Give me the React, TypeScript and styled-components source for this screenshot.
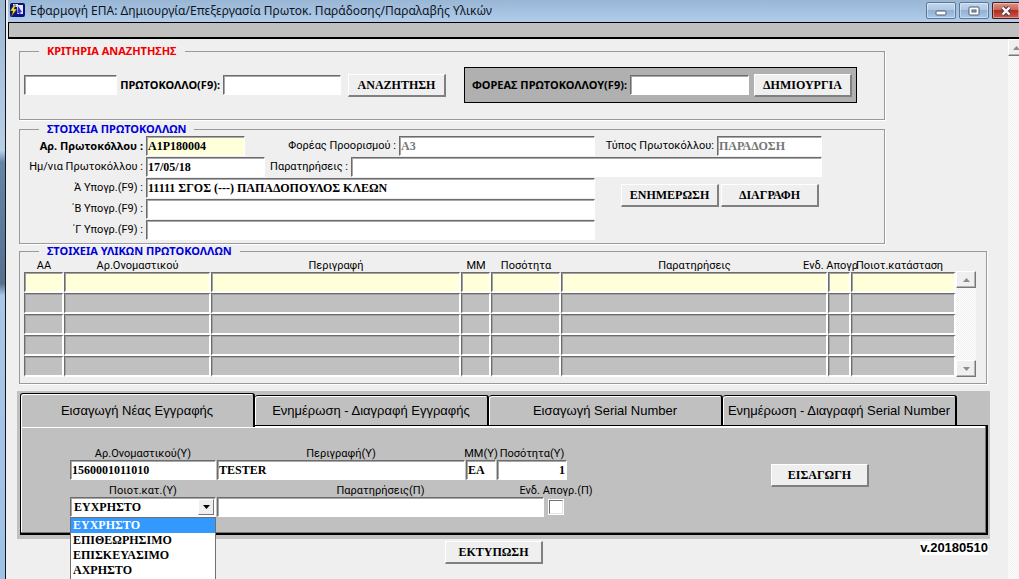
import React, { useState } from "react";
import styled, { createGlobalStyle, css } from "styled-components";

const ui = `"Noto Sans", "Open Sans", sans-serif`;
const labelFace = `Roboto, "Noto Sans", sans-serif`;
const serif = `"Liberation Serif", "Times New Roman", serif`;

const GlobalStyle = createGlobalStyle`
  *, *::before, *::after { box-sizing: border-box; }
  body {
    margin: 0;
    background: #efefef;
    font: 11px/12px ${labelFace};
    color: #000;
  }
`;

const sunken = css`
  border: 1px solid;
  border-color: #6c6c6c #fff #fff #6c6c6c;
  box-shadow: inset 1px 1px 0 #a8a8a8;
`;

const Window = styled.div`
  display: flex;
  height: 100vh;
  overflow: hidden;
`;

const Edge = styled.div`
  flex: none;
  width: 8px;
  border-right: 2px solid #efefef;
  background: linear-gradient(#9db7d3, #b9cfe8 26%, #6585a7 28%, #56718e 49%, #a9c7e8 51%, #9fc1e6);
  box-shadow: inset -1px 0 0 #101820;
`;

const Column = styled.div`
  flex: 1;
  min-width: 0;
  display: flex;
  flex-direction: column;
`;

const TitleBar = styled.header`
  display: flex;
  align-items: flex-start;
  height: 22px;
  flex: none;
  background: linear-gradient(#9ab6d5, #a5c3e3 60%, #b4cde8);
`;

const TitleIcon = styled.svg`
  flex: none;
  margin: 2px 4px 0 1px;
`;

const Title = styled.h1`
  margin: 0;
  flex: 1;
  min-width: 0;
  overflow: hidden;
  white-space: nowrap;
  font: 12px/22px ${ui};
  color: #101418;
`;

const WindowControls = styled.div`
  display: flex;
  gap: 3px;
  padding-top: 2px;
`;

const ControlButton = styled.button<{ $close?: boolean }>`
  display: flex;
  align-items: center;
  justify-content: center;
  width: ${(p) => (p.$close ? 27 : 30)}px;
  height: 17px;
  padding: 0;
  border: 1px solid ${(p) => (p.$close ? "#4c1a18" : "#5c7896")};
  border-right-width: ${(p) => (p.$close ? 0 : 1)}px;
  border-radius: ${(p) => (p.$close ? "2px 0 0 2px" : "2px")};
  box-shadow: inset 0 0 0 1px rgba(255, 255, 255, 0.4);
  background: ${(p) =>
    p.$close
      ? "linear-gradient(#dc9486, #c9655a 45%, #b02c20 50%, #cc5a48)"
      : "linear-gradient(#c3d7ee, #b0c8e4 45%, #93b1d3 50%, #a9c6e6)"};
`;

const MenuStrip = styled.div`
  flex: none;
  height: 17px;
  border: solid #000;
  border-width: 1px 0 2px 1px;
  background: #c0c0c0;
`;

const Body = styled.div`
  flex: 1;
  min-height: 0;
  display: flex;
`;

const Main = styled.main`
  flex: 1;
  min-width: 0;
  display: flex;
  flex-direction: column;
  padding: 6px 18px 0 9px;
`;

const dither = css`
  background: repeating-conic-gradient(#efefef 0 25%, #fff 0 50%) 0 0 / 2px 2px;
`;

const PageScroll = styled.div`
  flex: none;
  width: 11px;
  overflow: hidden;
  ${dither}
`;

const ArrowButton = styled.button<{ $w: number }>`
  display: flex;
  align-items: center;
  justify-content: center;
  flex: none;
  width: ${(p) => p.$w}px;
  height: 17px;
  padding: 0;
  border: 1px solid;
  border-color: #fff #777 #777 #fff;
  box-shadow: inset -1px -1px 0 #b4b4b4;
  background: #efefef;
`;

const Group = styled.fieldset<{ $wide?: boolean }>`
  min-width: 0;
  margin: 0 ${(p) => (p.$wide ? 3 : 105)}px 0 2px;
  padding: 0 4px;
  border: 1px solid #9a9a9a;
  box-shadow: 1px 1px 0 #fff;
`;

const Legend = styled.legend<{ $color: string }>`
  height: 12px;
  margin-left: 15px;
  padding: 0 8px;
  font-family: ${ui};
  font-weight: bold;
  color: ${(p) => p.$color};
  white-space: nowrap;
`;

const SearchRow = styled.div`
  display: flex;
  align-items: center;
  padding: 10px 23px 16px 0;
`;

const FieldLabel = styled.label<{ $w: number; $bold?: boolean }>`
  flex: none;
  width: ${(p) => p.$w}px;
  padding-right: 3px;
  text-align: right;
  white-space: nowrap;
  font-family: ${(p) => (p.$bold ? ui : labelFace)};
  font-weight: ${(p) => (p.$bold ? "bold" : "normal")};
`;

const Field = styled.input<{ $w?: number; $tone?: string }>`
  ${sunken}
  flex: ${(p) => (p.$w ? "none" : "1 1 0")};
  width: ${(p) => (p.$w ? `${p.$w}px` : "100%")};
  min-width: 0;
  height: 20px;
  padding: 0 1px;
  border-radius: 0;
  outline: none;
  background: ${(p) => p.$tone ?? "#fff"};
  font: bold 12px/16px ${serif};
  color: #000;

  &:disabled {
    color: #777;
    -webkit-text-fill-color: #777;
  }
`;

const PushButton = styled.button`
  flex: none;
  width: 98px;
  height: 23px;
  padding: 0;
  border: solid;
  border-width: 1px 2px 2px 1px;
  border-color: #fff #808080 #808080 #fff;
  background: #efefef;
  font: bold 12px/18px ${serif};
  color: #000;
`;

const SearchButton = styled(PushButton)`
  margin-left: 7px;
`;

const CreatePanel = styled.div`
  flex: 1;
  display: flex;
  align-items: center;
  gap: 5px;
  height: 36px;
  margin-left: 18px;
  padding: 0 4px 0 3px;
  border: 1px solid #000;
  background: #b0b0b0;

  label { margin-right: -5px; }
`;

const Details = styled.div`
  display: flex;
  flex-direction: column;
  gap: 1px;
  padding: 1px 58px 3px 0;
`;

const Line = styled.div`
  display: flex;
  align-items: center;
`;

const SignatureBlock = styled.div`
  display: flex;
  align-items: flex-start;
`;

const Signatures = styled.div`
  flex: 1;
  min-width: 0;
  display: flex;
  flex-direction: column;
  gap: 1px;
`;

const Actions = styled.div`
  display: flex;
  gap: 2px;
  padding: 6px 3px 0 26px;
`;

const GridArea = styled.div`
  display: flex;
  align-items: flex-end;
  padding: 3px 6px 6px 0;
`;

const Grid = styled.table`
  flex: 1;
  width: 100%;
  table-layout: fixed;
  border-collapse: separate;
  border-spacing: 0;
`;

const HeadCell = styled.th<{ $shift?: number }>`
  height: 12px;
  padding: 0;
  font-weight: normal;
  white-space: nowrap;

  div { display: flex; justify-content: center; }
  span { padding-right: ${(p) => p.$shift ?? 0}px; }
`;

const Cell = styled.td<{ $current: boolean }>`
  height: 21px;
  padding: 0;
  border: solid;
  border-width: 1px 2px 2px 1px;
  border-color: #6c6c6c #fff #fff #6c6c6c;
  box-shadow: inset 1px 1px 0 #a0a0a0;
  background: ${(p) => (p.$current ? "#ffffd9" : "#c0c0c0")};
`;

const GridScroll = styled.div`
  display: flex;
  flex-direction: column;
  justify-content: space-between;
  width: 20px;
  height: 106px;
  ${dither}
`;

const TabArea = styled.section`
  margin-top: 7px;
  padding: 2px 2px 4px 3px;
  background: #c0c0c0;
`;

const TabBar = styled.div`
  display: flex;
  align-items: flex-end;
  padding-right: 31px;
`;

const Tab = styled.button<{ $active: boolean }>`
  position: relative;
  z-index: ${(p) => (p.$active ? 1 : 0)};
  flex: 1 1 0;
  min-width: 0;
  height: ${(p) => (p.$active ? 34 : 30)}px;
  margin-bottom: ${(p) => (p.$active ? -2 : 0)}px;
  padding: 0;
  border: solid #000;
  border-width: ${(p) => (p.$active ? "1px 2px 0 1px" : "1px 2px 0 0")};
  border-radius: 3px 3px 0 0;
  box-shadow: inset 1px 1px 0 #fff;
  background: #c0c0c0;
  font: 13px/16px "Liberation Sans", Arial, sans-serif;
  color: #000;
  white-space: nowrap;
`;

const TabPanel = styled.div`
  position: relative;
  display: flex;
  align-items: flex-start;
  padding: 21px 117px 16px 49px;
  border: solid #000;
  border-width: 1px 2px 2px 1px;
  box-shadow: inset -1px -1px 0 #777, inset 1px 2px 0 #fff;

  button { margin-top: 17px; }
`;

const Form = styled.div`
  flex: 1;
  min-width: 0;
  display: flex;
  flex-direction: column;
  gap: 4px;
  margin-right: 204px;
`;

const FormRow = styled.div`
  display: flex;
  gap: 1px;
`;

const Stack = styled.div<{ $w?: number }>`
  flex: ${(p) => (p.$w ? "none" : "1 1 0")};
  width: ${(p) => (p.$w ? `${p.$w}px` : "auto")};
  min-width: 0;
  display: flex;
  flex-direction: column;
  align-items: center;
  position: relative;

  label { white-space: nowrap; line-height: 13px; }
  input:not([type="checkbox"]) { flex: none; width: 100%; }
`;

const Amount = styled(Field)`
  text-align: right;
`;

const SelectBox = styled.div`
  ${sunken}
  display: flex;
  align-items: center;
  width: 100%;
  height: 20px;
  padding: 1px;
  background: #fff;
`;

const Select = styled.select`
  appearance: none;
  flex: 1;
  min-width: 0;
  height: 16px;
  padding: 0 2px;
  border: 0;
  outline: none;
  background: transparent;
  font: bold 12px/16px ${serif};
  color: #000;
`;

const DropArrow = styled.span`
  display: flex;
  align-items: center;
  justify-content: center;
  width: 16px;
  height: 16px;
  border: 1px solid;
  border-color: #fff #777 #777 #fff;
  background: #efefef;
`;

const OptionList = styled.ul`
  position: absolute;
  z-index: 2;
  top: 100%;
  left: 0;
  right: 0;
  margin: 0;
  padding: 0 0 3px;
  border: 1px solid #707070;
  background: #fff;
  list-style: none;
`;

const Option = styled.li<{ $selected: boolean }>`
  padding: 0 2px;
  font: bold 12px/15px ${serif};
  color: ${(p) => (p.$selected ? "#fff" : "#000")};
  background: ${(p) => (p.$selected ? "#3399ff" : "#fff")};
`;

const Check = styled.input`
  appearance: none;
  width: 14px;
  height: 14px;
  margin: 3px 0 0;
  border: 1px solid;
  border-color: #707070 #e4e4e4 #e4e4e4 #707070;
  background: #fff;
  box-shadow: 0 0 0 1px #fff;
`;

const Footer = styled.footer`
  display: grid;
  grid-template-columns: 426px auto 1fr;
  align-items: start;
  padding: 2px 2px 0 2px;

  button { grid-column: 2; }
`;

const Version = styled.span`
  justify-self: end;
  background: #fff;
  font: bold 13px/14px "Liberation Sans", Arial, sans-serif;
`;

const Triangle = ({ down = false, color = "#8c8c8c" }: { down?: boolean; color?: string }) => (
  <svg width="7" height="4" viewBox="0 0 7 4" aria-hidden="true">
    <path d={down ? "M0 0h7L3.5 4z" : "M0 4h7L3.5 0z"} fill={color} />
  </svg>
);

const GroupStack = styled.div`
  display: flex;
  flex-direction: column;
  gap: 3px;
`;

const DetailGroups = styled.div`
  display: flex;
  flex-direction: column;
  gap: 1px;
`;

const columns: { title: string; width?: string; shift?: number }[] = [
  { title: "ΑΑ", width: "40px" },
  { title: "Αρ.Ονομαστικού", width: "147px" },
  { title: "Περιγραφή", width: "250px" },
  { title: "ΜΜ", width: "30px" },
  { title: "Ποσότητα", width: "70px" },
  { title: "Παρατηρήσεις" },
  { title: "Ενδ. Απογρ", width: "23px", shift: 18 },
  { title: "Ποιοτ.κατάσταση", width: "105px", shift: 8 },
];

const tabs = [
  "Εισαγωγή Νέας Εγγραφής",
  "Ενημέρωση - Διαγραφή Εγγραφής",
  "Εισαγωγή Serial Number",
  "Ενημέρωση - Διαγραφή Serial Number",
];

const conditions = ["ΕΥΧΡΗΣΤΟ", "ΕΠΙΘΕΩΡΗΣΙΜΟ", "ΕΠΙΣΚΕΥΑΣΙΜΟ", "ΑΧΡΗΣΤΟ"];

export default function App() {
  const [tab, setTab] = useState(0);
  const [condition, setCondition] = useState(conditions[0]);

  return (
    <Window>
      <GlobalStyle />
      <Edge />
      <Column>
        <TitleBar>
          <TitleIcon width="17" height="16" viewBox="0 0 17 16" aria-hidden="true">
            <rect x="1" y="1" width="15" height="14" rx="2" fill="#10107c" />
            <path d="M4 2h5v3H4zM8 3h6v9H8z" fill="#e4e4fa" />
            <path d="M9 4l4 6-2 .4 1 2-1.4.4-.8-2-1.6 1z" fill="#2c35d8" />
            <path d="M5 3L1 9h3l-2 6 6-8H5l2-4z" fill="#f6ec28" stroke="#2a2a20" strokeWidth=".5" />
          </TitleIcon>
          <Title>Εφαρμογή ΕΠΑ: Δημιουργία/Επεξεργασία Πρωτοκ. Παράδοσης/Παραλαβής Υλικών</Title>
          <WindowControls>
            <ControlButton aria-label="Ελαχιστοποίηση">
              <svg width="12" height="10" viewBox="0 0 12 10">
                <rect x="1" y="5" width="10" height="4" rx="1" fill="#fff" stroke="#4b5a6c" />
              </svg>
            </ControlButton>
            <ControlButton aria-label="Μεγιστοποίηση">
              <svg width="12" height="10" viewBox="0 0 12 10">
                <rect x="1" y="1" width="10" height="8" rx="1" fill="#fff" stroke="#4b5a6c" />
                <rect x="4" y="4" width="4" height="2" fill="#a9c0dc" stroke="#4b5a6c" />
              </svg>
            </ControlButton>
            <ControlButton $close aria-label="Κλείσιμο">
              <svg width="12" height="10" viewBox="0 0 12 10">
                <path d="M2.5 1.5l7 7M9.5 1.5l-7 7" stroke="#4a3a44" strokeWidth="4.4" />
                <path d="M2.5 1.5l7 7M9.5 1.5l-7 7" stroke="#fff" strokeWidth="2.4" />
              </svg>
            </ControlButton>
          </WindowControls>
        </TitleBar>
        <MenuStrip />
        <Body>
          <Main>
            <DetailGroups>
              <GroupStack>
                <Group>
                  <Legend $color="#f00000">ΚΡΙΤΗΡΙΑ ΑΝΑΖΗΤΗΣΗΣ</Legend>
                  <SearchRow>
                    <Field $w={93} aria-label="Κωδικός" />
                    <FieldLabel $w={106} $bold htmlFor="protocol">ΠΡΩΤΟΚΟΛΛΟ(F9):</FieldLabel>
                    <Field $w={118} id="protocol" />
                    <SearchButton>ΑΝΑΖΗΤΗΣΗ</SearchButton>
                    <CreatePanel>
                      <FieldLabel $w={162} $bold htmlFor="agency">ΦΟΡΕΑΣ ΠΡΩΤΟΚΟΛΛΟΥ(F9):</FieldLabel>
                      <Field id="agency" />
                      <PushButton>ΔΗΜΙΟΥΡΓΙΑ</PushButton>
                    </CreatePanel>
                  </SearchRow>
                </Group>

                <Group>
                  <Legend $color="#0000d8">ΣΤΟΙΧΕΙΑ ΠΡΩΤΟΚΟΛΛΩΝ</Legend>
                  <Details>
                    <Line>
                      <FieldLabel $w={122} $bold htmlFor="number">Αρ. Πρωτοκόλλου :</FieldLabel>
                      <Field $w={99} $tone="#ffffd9" id="number" defaultValue="A1P180004" />
                      <FieldLabel $w={154} htmlFor="target">Φορέας Προορισμού :</FieldLabel>
                      <Field id="target" disabled defaultValue="A3" />
                      <FieldLabel $w={122} htmlFor="kind">Τύπος Πρωτοκόλλου:</FieldLabel>
                      <Field $w={105} id="kind" disabled defaultValue="ΠΑΡΑΔΟΣΗ" />
                    </Line>
                    <Line>
                      <FieldLabel $w={122} htmlFor="date">Ημ/νια Πρωτοκόλλου :</FieldLabel>
                      <Field $w={119} id="date" defaultValue="17/05/18" />
                      <FieldLabel $w={86} htmlFor="notes">Παρατηρήσεις :</FieldLabel>
                      <Field id="notes" />
                    </Line>
                    <SignatureBlock>
                      <Signatures>
                        <Line>
                          <FieldLabel $w={122} htmlFor="sign1">Ά Υπογρ.(F9) :</FieldLabel>
                          <Field id="sign1" defaultValue="11111 ΣΓΟΣ (---) ΠΑΠΑΔΟΠΟΥΛΟΣ ΚΛΕΩΝ" />
                        </Line>
                        <Line>
                          <FieldLabel $w={122} htmlFor="sign2">΄Β Υπογρ.(F9) :</FieldLabel>
                          <Field id="sign2" />
                        </Line>
                        <Line>
                          <FieldLabel $w={122} htmlFor="sign3">΄Γ Υπογρ.(F9) :</FieldLabel>
                          <Field id="sign3" />
                        </Line>
                      </Signatures>
                      <Actions>
                        <PushButton>ΕΝΗΜΕΡΩΣΗ</PushButton>
                        <PushButton>ΔΙΑΓΡΑΦΗ</PushButton>
                      </Actions>
                    </SignatureBlock>
                  </Details>
                </Group>
              </GroupStack>

              <Group $wide>
                <Legend $color="#0000d8">ΣΤΟΙΧΕΙΑ ΥΛΙΚΩΝ ΠΡΩΤΟΚΟΛΛΩΝ</Legend>
                <GridArea>
                  <Grid>
                    <colgroup>
                      {columns.map((c) => (
                        <col key={c.title} width={c.width} />
                      ))}
                    </colgroup>
                    <thead>
                      <tr>
                        {columns.map((c) => (
                          <HeadCell key={c.title} scope="col" $shift={c.shift}>
                            <div><span>{c.title}</span></div>
                          </HeadCell>
                        ))}
                      </tr>
                    </thead>
                    <tbody>
                      {[0, 1, 2, 3, 4].map((r) => (
                        <tr key={r}>
                          {columns.map((c) => (
                            <Cell key={c.title} $current={r === 0} />
                          ))}
                        </tr>
                      ))}
                    </tbody>
                  </Grid>
                  <GridScroll>
                    <ArrowButton $w={20} aria-label="Πάνω"><Triangle /></ArrowButton>
                    <ArrowButton $w={20} aria-label="Κάτω"><Triangle down /></ArrowButton>
                  </GridScroll>
                </GridArea>
              </Group>
            </DetailGroups>

            <TabArea>
              <TabBar role="tablist">
                {tabs.map((t, i) => (
                  <Tab key={t} role="tab" aria-selected={i === tab} $active={i === tab} onClick={() => setTab(i)}>
                    {t}
                  </Tab>
                ))}
              </TabBar>
              <TabPanel role="tabpanel">
                <Form>
                  <FormRow>
                    <Stack $w={146}>
                      <label htmlFor="code">Αρ.Ονομαστικού(Υ)</label>
                      <Field id="code" defaultValue="1560001011010" />
                    </Stack>
                    <Stack>
                      <label htmlFor="description">Περιγραφή(Υ)</label>
                      <Field id="description" defaultValue="TESTER" />
                    </Stack>
                    <Stack $w={30}>
                      <label htmlFor="unit">ΜΜ(Υ)</label>
                      <Field id="unit" defaultValue="EA" />
                    </Stack>
                    <Stack $w={70}>
                      <label htmlFor="amount">Ποσότητα(Υ)</label>
                      <Amount id="amount" defaultValue="1" />
                    </Stack>
                  </FormRow>
                  <FormRow>
                    <Stack $w={146}>
                      <label htmlFor="condition">Ποιοτ.κατ.(Υ)</label>
                      <SelectBox>
                        <Select id="condition" value={condition} onChange={(e) => setCondition(e.target.value)}>
                          {conditions.map((c) => (
                            <option key={c}>{c}</option>
                          ))}
                        </Select>
                        <DropArrow><Triangle down color="#000" /></DropArrow>
                      </SelectBox>
                      <OptionList>
                        {conditions.map((c) => (
                          <Option key={c} $selected={c === condition} onClick={() => setCondition(c)}>{c}</Option>
                        ))}
                      </OptionList>
                    </Stack>
                    <Stack>
                      <label htmlFor="remarks">Παρατηρήσεις(Π)</label>
                      <Field id="remarks" />
                    </Stack>
                    <Stack $w={22}>
                      <label htmlFor="inventory">Ενδ. Απογρ.(Π)</label>
                      <Check type="checkbox" id="inventory" />
                    </Stack>
                  </FormRow>
                </Form>
                <PushButton>ΕΙΣΑΓΩΓΗ</PushButton>
              </TabPanel>
            </TabArea>

            <Footer>
              <PushButton>ΕΚΤΥΠΩΣΗ</PushButton>
              <Version>v.20180510</Version>
            </Footer>
          </Main>
          <PageScroll>
            <ArrowButton $w={16} aria-label="Κύλιση πάνω"><Triangle /></ArrowButton>
          </PageScroll>
        </Body>
      </Column>
    </Window>
  );
}
